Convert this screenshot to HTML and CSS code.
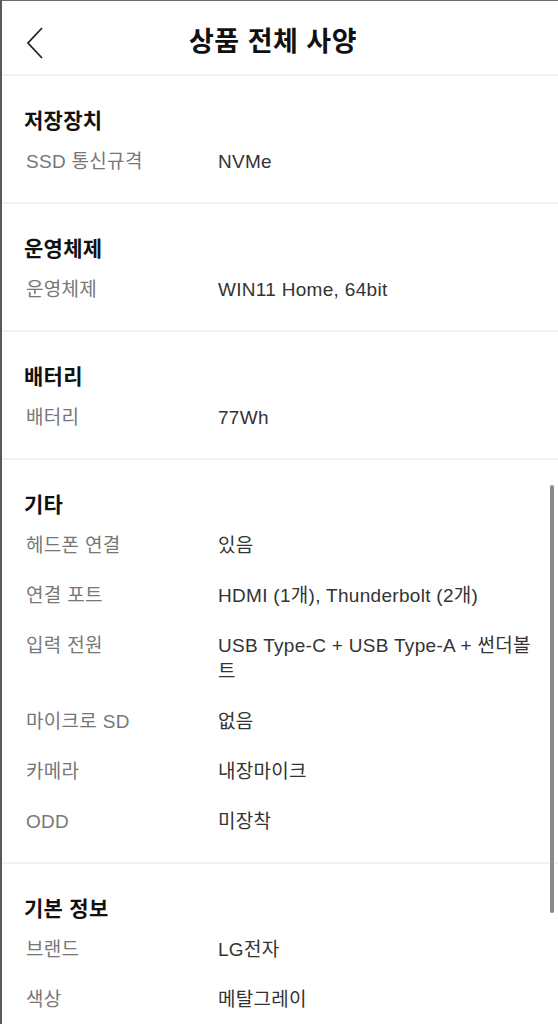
FILE: index.html
```html
<!DOCTYPE html>
<html lang="ko">
<head>
<meta charset="utf-8">
<title>상품 전체 사양</title>
<link rel="stylesheet" href="styles.css">
</head>
<body>
<div class="screen">
  <header class="topbar">
    <svg class="back" width="20" height="34" viewBox="0 0 20 34"><path d="M17 2 L3 17 L17 32" fill="none" stroke="#222" stroke-width="1.8"/></svg>
    <h1 class="title">상품 전체 사양</h1>
  </header>
  <main class="content">
    <section class="group">
      <h2 class="group-title">저장장치</h2>
      <div class="row"><span class="label">SSD 통신규격</span><span class="value">NVMe</span></div>
    </section>
    <section class="group">
      <h2 class="group-title">운영체제</h2>
      <div class="row"><span class="label">운영체제</span><span class="value">WIN11 Home, 64bit</span></div>
    </section>
    <section class="group">
      <h2 class="group-title">배터리</h2>
      <div class="row"><span class="label">배터리</span><span class="value">77Wh</span></div>
    </section>
    <section class="group">
      <h2 class="group-title">기타</h2>
      <div class="row"><span class="label">헤드폰 연결</span><span class="value">있음</span></div>
      <div class="row"><span class="label">연결 포트</span><span class="value">HDMI (1개), Thunderbolt (2개)</span></div>
      <div class="row"><span class="label">입력 전원</span><span class="value">USB Type-C + USB Type-A + 썬더볼트</span></div>
      <div class="row"><span class="label">마이크로 SD</span><span class="value">없음</span></div>
      <div class="row"><span class="label">카메라</span><span class="value">내장마이크</span></div>
      <div class="row"><span class="label">ODD</span><span class="value">미장착</span></div>
    </section>
    <section class="group">
      <h2 class="group-title">기본 정보</h2>
      <div class="row"><span class="label">브랜드</span><span class="value">LG전자</span></div>
      <div class="row"><span class="label">색상</span><span class="value">메탈그레이</span></div>
    </section>
  </main>
  <div class="scrollbar"></div>
</div>
</body>
</html>
```
FILE: styles.css
```css
html, body {
  margin: 0;
  padding: 0;
  background: #fff;
}
body {
  font-family: "Liberation Sans", "Noto Sans CJK KR", sans-serif;
  color: #222;
}
.screen {
  position: relative;
  width: 556px;
  height: 1023px;
  border-left: 2px solid #5a5a5a;
  border-top: 1px solid #6a6a6a;
  overflow: hidden;
}
.topbar {
  height: 70px;
  padding: 3px 14px 0 0;
  display: flex;
  align-items: center;
  justify-content: center;
  position: relative;
  border-bottom: 2px solid #f1f1f1;
}
.back {
  position: absolute;
  left: 23px;
  top: 25px;
}
.title {
  margin: 0;
  font-size: 27px;
  font-weight: 700;
  color: #111;
  letter-spacing: 0.5px;
}
.group {
  padding: 30px 0 16px 22px;
  border-bottom: 2px solid #f1f1f1;
}
.group-title {
  margin: 0;
  font-size: 21px;
  line-height: 30px;
  font-weight: 700;
  color: #111;
  letter-spacing: 0.3px;
}
.row {
  display: flex;
  padding: 13px 0 11px;
  font-size: 19px;
  line-height: 26px;
  letter-spacing: 0.3px;
}
.label {
  width: 192px;
  flex: none;
  padding-left: 2px;
  color: #777;
}
.value {
  flex: 1;
  padding-right: 24px;
  color: #333;
  word-break: break-all;
}
.scrollbar {
  position: absolute;
  right: 4px;
  top: 484px;
  width: 4px;
  height: 428px;
  border-radius: 2px;
  background: #8a8a8a;
}
```
